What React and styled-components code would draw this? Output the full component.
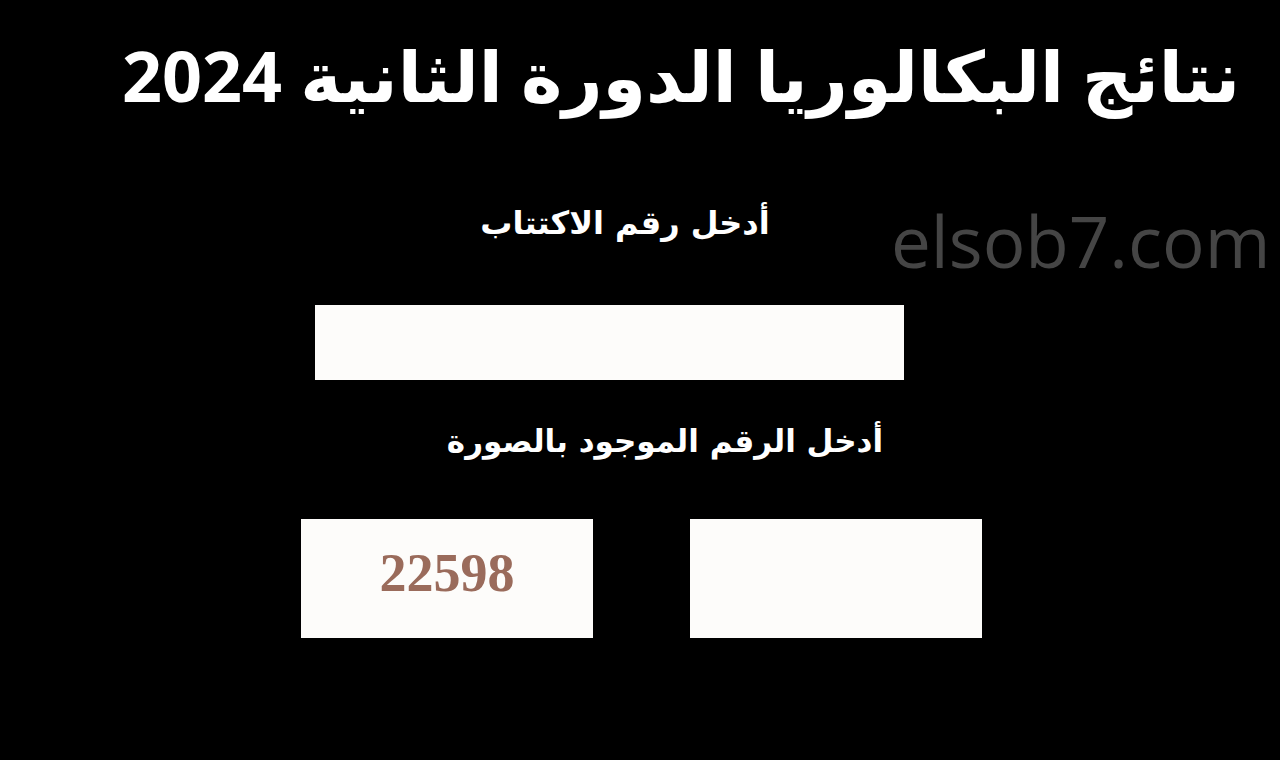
import React from 'react';
import styled, { createGlobalStyle } from 'styled-components';

const GlobalStyle = createGlobalStyle`
    html, body {
        margin: 0;
        padding: 0;
        background: #000;
    }
    #root {
        min-height: 760px;
    }
`;

const App = () => {
    return (
        <Page dir="rtl">
            <GlobalStyle />
            <Title>نتائج البكالوريا الدورة الثانية 2024</Title>
            <Watermark dir="ltr">elsob7.com</Watermark>
            <Row shift={-30} top={76}>
                <Label size={32}>أدخل رقم الاكتتاب</Label>
            </Row>
            <Row shift={-61} top={57}>
                <Field />
            </Row>
            <Row shift={50} top={36}>
                <Label size={31}>أدخل الرقم الموجود بالصورة</Label>
            </Row>
            <BoxRow>
                <Box />
                <Box>
                    <Captcha>22598</Captcha>
                </Box>
            </BoxRow>
        </Page>
    );
};

const Page = styled.div`
    position: relative;
    width: 1280px;
    height: 760px;
    background: #000;
    display: flex;
    flex-direction: column;
    overflow: hidden;
`;

const Title = styled.h1`
    margin: 0;
    padding: 28px 40px 0 0;
    font-family: 'Noto Sans', 'DejaVu Sans', sans-serif;
    font-size: 70px;
    font-weight: 700;
    line-height: 94px;
    color: #fff;
    text-align: right;
`;

const Watermark = styled.div`
    position: absolute;
    left: 891px;
    top: 192px;
    font-family: 'Open Sans', 'Noto Sans', sans-serif;
    font-size: 71px;
    font-weight: 400;
    color: #454545;
`;

const Row = styled.div`
    display: flex;
    justify-content: center;
    margin-top: ${props => (props.top || 0) + 'px'};
    padding-left: ${props => (props.shift > 0 ? props.shift : 0) + 'px'};
    padding-right: ${props => (props.shift < 0 ? -props.shift : 0) + 'px'};
`;

const Label = styled.div`
    font-family: 'DejaVu Sans', sans-serif;
    font-size: ${props => props.size + 'px'};
    font-weight: 700;
    line-height: 50px;
    color: #fff;
`;

const Field = styled.div`
    width: 589px;
    height: 75px;
    background: #fdfcfa;
`;

const BoxRow = styled.div`
    display: flex;
    justify-content: center;
    gap: 97px;
    margin-top: 53px;
    padding-left: 3px;
`;

const Box = styled.div`
    width: 292px;
    height: 119px;
    background: #fdfcfa;
    display: flex;
    align-items: center;
    justify-content: center;
`;

const Captcha = styled.span`
    font-family: 'Liberation Serif', serif;
    font-size: 54px;
    font-weight: 700;
    color: #9a6b5b;
    padding-bottom: 12px;
`;

export default App;
